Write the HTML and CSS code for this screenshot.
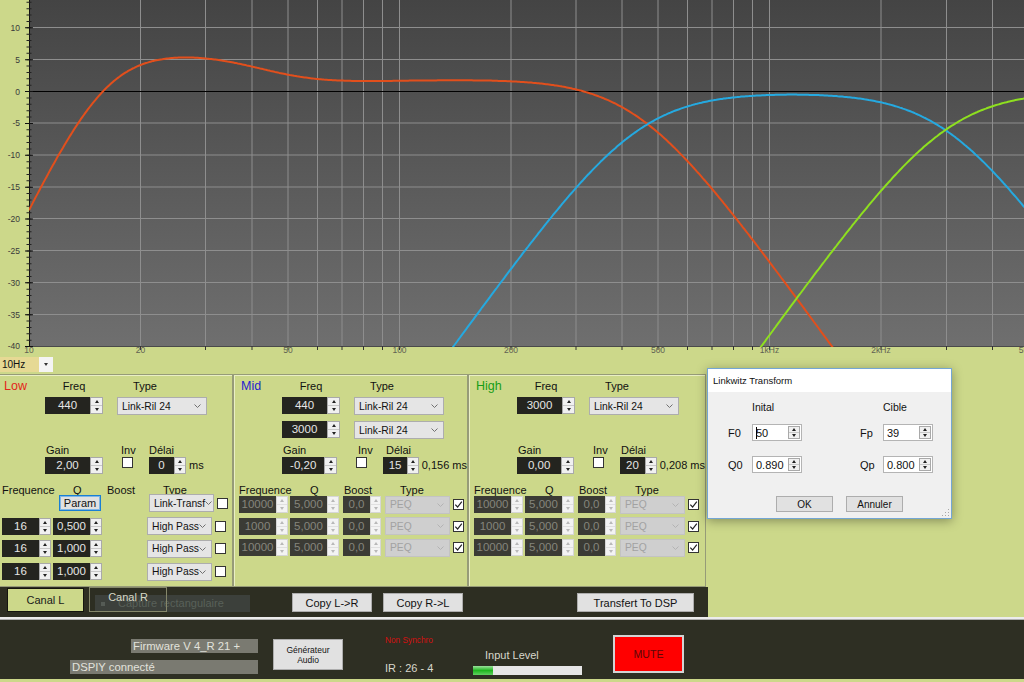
FILE: index.html
```html
<!DOCTYPE html>
<html lang="fr">
<head>
  <meta charset="UTF-8">
  <title>DSPIY - Crossover</title>
  <link rel="stylesheet" href="styles.css">
</head>
<body>
<div class="app">

  <!-- COURBE -->
  <div class="graph">
    <svg width="1024" height="357" viewBox="0 0 1024 357">
      <defs>
        <linearGradient id="fond" x1="0" y1="0" x2="0" y2="1">
          <stop offset="0" stop-color="#444444"/>
          <stop offset="1" stop-color="#6f6f6f"/>
        </linearGradient>
        <clipPath id="zone">
          <rect x="29" y="0" width="995" height="347"/>
        </clipPath>
      </defs>
      <rect x="29" y="0" width="995" height="346" fill="url(#fond)"/>
      <path class="grille" d="M29 27.5H1024M29 59.5H1024M29 123H1024M29 155H1024M29 187H1024M29 218.5H1024M29 250.5H1024M29 282.5H1024M29 314.5H1024
        M140.5 0V346M205.5 0V346M252 0V346M288 0V346M317.5 0V346M342 0V346M363.5 0V346M382.5 0V346M399.5 0V346
        M511 0V346M576 0V346M622 0V346M658 0V346M687.5 0V346M712 0V346M733.5 0V346M752.5 0V346M769.5 0V346
        M881 0V346M946.5 0V346M992.5 0V346"/>
      <path class="zero" d="M29 91.5H1024"/>
      <path class="axe-bas" d="M29 346.5H1024"/>
      <path class="ticks" d="M140.5 346v4M205.5 346v4M252 346v4M288 346v4M317.5 346v4M342 346v4M363.5 346v4M382.5 346v4M399.5 346v4
        M511 346v4M576 346v4M622 346v4M658 346v4M687.5 346v4M712 346v4M733.5 346v4M752.5 346v4M769.5 346v4M881 346v4M946.5 346v4M992.5 346v4"/>
      <line class="axe-y" x1="29.5" y1="0" x2="29.5" y2="347"/>
      <line class="tick-min" x1="29" y1="347" x2="29" y2="0"/>
      <line class="tick-maj" x1="29" y1="347" x2="29" y2="0"/>

      <g class="lbl-y">
        <text x="20" y="30.5">10</text>
        <text x="20" y="62.5">5</text>
        <text x="20" y="94.5">0</text>
        <text x="20" y="126">-5</text>
        <text x="20" y="158">-10</text>
        <text x="20" y="190">-15</text>
        <text x="20" y="221.5">-20</text>
        <text x="20" y="253.5">-25</text>
        <text x="20" y="285.5">-30</text>
        <text x="20" y="317.5">-35</text>
        <text x="20" y="348.5">-40</text>
      </g>
      <g class="lbl-x">
        <text x="29" y="353">10</text>
        <text x="140.5" y="353">20</text>
        <text x="288" y="353">50</text>
        <text x="399.5" y="353">100</text>
        <text x="511" y="353">200</text>
        <text x="658" y="353">500</text>
        <text x="769.5" y="353">1kHz</text>
        <text x="881" y="353">2kHz</text>
        <text x="1028.5" y="353">5kHz</text>
      </g>

      <g clip-path="url(#zone)">
        <polyline id="c-low" class="c-low" points=""/>
        <polyline id="c-mid" class="c-mid" points=""/>
        <polyline id="c-high" class="c-high" points=""/>
      </g>
    </svg>
  </div>

  <div class="scalebar">
    <div class="combo"><span class="combo-val">10Hz</span><span class="combo-btn"></span></div>
  </div>

  <!-- CANAUX -->
  <div class="panels">

    <div class="group low">
      <div class="r-head">
        <span class="title t-low">Low</span>
        <span class="lbl c-freq">Freq</span>
        <span class="lbl c-type">Type</span>
      </div>
      <div class="r-main">
        <div class="num n-main"><span class="val">440</span><span class="spin"><i></i><i class="dn"></i></span></div>
        <div class="sel s-main">Link-Ril 24<svg class="chev" width="7" height="4" viewBox="0 0 7 4"><path d="M0.5 0.5L3.5 3.5L6.5 0.5"/></svg></div>
      </div>
      <div class="r-main r-second"></div>
      <div class="r-glabels">
        <span class="lbl g-gain">Gain</span><span class="lbl g-inv">Inv</span><span class="lbl">Délai</span>
      </div>
      <div class="r-gain">
        <div class="num n-main"><span class="val">2,00</span><span class="spin"><i></i><i class="dn"></i></span></div>
        <span class="cb"></span>
        <div class="num n-del"><span class="val">0</span><span class="spin"><i></i><i class="dn"></i></span></div>
        <span class="unit">ms</span>
      </div>
      <div class="r-fhead">
        <span class="lbl h-freq">Frequence</span><span class="lbl h-q">Q</span><span class="lbl h-boost">Boost</span><span class="lbl">Type</span>
      </div>
      <div class="filters f-low">
        <div class="frow">
          <button class="param">Param</button>
          <div class="sel s-filt s-after">Link-Transf<svg class="chev" width="7" height="4" viewBox="0 0 7 4"><path d="M0.5 0.5L3.5 3.5L6.5 0.5"/></svg></div>
          <span class="cb"></span>
        </div>
        <div class="frow">
          <div class="num n-f"><span class="val">16</span><span class="spin"><i></i><i class="dn"></i></span></div>
          <div class="num n-f n-q"><span class="val">0,500</span><span class="spin"><i></i><i class="dn"></i></span></div>
          <div class="sel s-filt s-far">High Pass<svg class="chev" width="7" height="4" viewBox="0 0 7 4"><path d="M0.5 0.5L3.5 3.5L6.5 0.5"/></svg></div>
          <span class="cb"></span>
        </div>
        <div class="frow">
          <div class="num n-f"><span class="val">16</span><span class="spin"><i></i><i class="dn"></i></span></div>
          <div class="num n-f n-q"><span class="val">1,000</span><span class="spin"><i></i><i class="dn"></i></span></div>
          <div class="sel s-filt s-far">High Pass<svg class="chev" width="7" height="4" viewBox="0 0 7 4"><path d="M0.5 0.5L3.5 3.5L6.5 0.5"/></svg></div>
          <span class="cb"></span>
        </div>
        <div class="frow">
          <div class="num n-f"><span class="val">16</span><span class="spin"><i></i><i class="dn"></i></span></div>
          <div class="num n-f n-q"><span class="val">1,000</span><span class="spin"><i></i><i class="dn"></i></span></div>
          <div class="sel s-filt s-far">High Pass<svg class="chev" width="7" height="4" viewBox="0 0 7 4"><path d="M0.5 0.5L3.5 3.5L6.5 0.5"/></svg></div>
          <span class="cb"></span>
        </div>
      </div>
    </div>

    <div class="group mid">
      <div class="r-head">
        <span class="title t-mid">Mid</span>
        <span class="lbl c-freq">Freq</span>
        <span class="lbl c-type">Type</span>
      </div>
      <div class="r-main">
        <div class="num n-main"><span class="val">440</span><span class="spin"><i></i><i class="dn"></i></span></div>
        <div class="sel s-main">Link-Ril 24<svg class="chev" width="7" height="4" viewBox="0 0 7 4"><path d="M0.5 0.5L3.5 3.5L6.5 0.5"/></svg></div>
      </div>
      <div class="r-main r-second">
        <div class="num n-main"><span class="val">3000</span><span class="spin"><i></i><i class="dn"></i></span></div>
        <div class="sel s-main">Link-Ril 24<svg class="chev" width="7" height="4" viewBox="0 0 7 4"><path d="M0.5 0.5L3.5 3.5L6.5 0.5"/></svg></div>
      </div>
      <div class="r-glabels">
        <span class="lbl g-gain">Gain</span><span class="lbl g-inv">Inv</span><span class="lbl">Délai</span>
      </div>
      <div class="r-gain">
        <div class="num n-main"><span class="val">-0,20</span><span class="spin"><i></i><i class="dn"></i></span></div>
        <span class="cb"></span>
        <div class="num n-del"><span class="val">15</span><span class="spin"><i></i><i class="dn"></i></span></div>
        <span class="unit">0,156 ms</span>
      </div>
      <div class="r-fhead">
        <span class="lbl h-freq">Frequence</span><span class="lbl h-q">Q</span><span class="lbl h-boost">Boost</span><span class="lbl">Type</span>
      </div>
      <div class="filters">
        <div class="frow off">
          <div class="num n-f"><span class="val">10000</span><span class="spin"><i></i><i class="dn"></i></span></div>
          <div class="num n-f n-q"><span class="val">5,000</span><span class="spin"><i></i><i class="dn"></i></span></div>
          <div class="num n-b"><span class="val">0,0</span><span class="spin"><i></i><i class="dn"></i></span></div>
          <div class="sel s-filt">PEQ<svg class="chev" width="7" height="4" viewBox="0 0 7 4"><path d="M0.5 0.5L3.5 3.5L6.5 0.5"/></svg></div>
          <span class="cb on"><svg width="9" height="9" viewBox="0 0 9 9"><path d="M1.3 4.6L3.6 7L7.8 1.6"/></svg></span>
        </div>
        <div class="frow off">
          <div class="num n-f"><span class="val">1000</span><span class="spin"><i></i><i class="dn"></i></span></div>
          <div class="num n-f n-q"><span class="val">5,000</span><span class="spin"><i></i><i class="dn"></i></span></div>
          <div class="num n-b"><span class="val">0,0</span><span class="spin"><i></i><i class="dn"></i></span></div>
          <div class="sel s-filt">PEQ<svg class="chev" width="7" height="4" viewBox="0 0 7 4"><path d="M0.5 0.5L3.5 3.5L6.5 0.5"/></svg></div>
          <span class="cb on"><svg width="9" height="9" viewBox="0 0 9 9"><path d="M1.3 4.6L3.6 7L7.8 1.6"/></svg></span>
        </div>
        <div class="frow off">
          <div class="num n-f"><span class="val">10000</span><span class="spin"><i></i><i class="dn"></i></span></div>
          <div class="num n-f n-q"><span class="val">5,000</span><span class="spin"><i></i><i class="dn"></i></span></div>
          <div class="num n-b"><span class="val">0,0</span><span class="spin"><i></i><i class="dn"></i></span></div>
          <div class="sel s-filt">PEQ<svg class="chev" width="7" height="4" viewBox="0 0 7 4"><path d="M0.5 0.5L3.5 3.5L6.5 0.5"/></svg></div>
          <span class="cb on"><svg width="9" height="9" viewBox="0 0 9 9"><path d="M1.3 4.6L3.6 7L7.8 1.6"/></svg></span>
        </div>
      </div>
    </div>

    <div class="group high">
      <div class="r-head">
        <span class="title t-high">High</span>
        <span class="lbl c-freq">Freq</span>
        <span class="lbl c-type">Type</span>
      </div>
      <div class="r-main">
        <div class="num n-main"><span class="val">3000</span><span class="spin"><i></i><i class="dn"></i></span></div>
        <div class="sel s-main">Link-Ril 24<svg class="chev" width="7" height="4" viewBox="0 0 7 4"><path d="M0.5 0.5L3.5 3.5L6.5 0.5"/></svg></div>
      </div>
      <div class="r-main r-second"></div>
      <div class="r-glabels">
        <span class="lbl g-gain">Gain</span><span class="lbl g-inv">Inv</span><span class="lbl">Délai</span>
      </div>
      <div class="r-gain">
        <div class="num n-main"><span class="val">0,00</span><span class="spin"><i></i><i class="dn"></i></span></div>
        <span class="cb"></span>
        <div class="num n-del"><span class="val">20</span><span class="spin"><i></i><i class="dn"></i></span></div>
        <span class="unit">0,208 ms</span>
      </div>
      <div class="r-fhead">
        <span class="lbl h-freq">Frequence</span><span class="lbl h-q">Q</span><span class="lbl h-boost">Boost</span><span class="lbl">Type</span>
      </div>
      <div class="filters">
        <div class="frow off">
          <div class="num n-f"><span class="val">10000</span><span class="spin"><i></i><i class="dn"></i></span></div>
          <div class="num n-f n-q"><span class="val">5,000</span><span class="spin"><i></i><i class="dn"></i></span></div>
          <div class="num n-b"><span class="val">0,0</span><span class="spin"><i></i><i class="dn"></i></span></div>
          <div class="sel s-filt">PEQ<svg class="chev" width="7" height="4" viewBox="0 0 7 4"><path d="M0.5 0.5L3.5 3.5L6.5 0.5"/></svg></div>
          <span class="cb on"><svg width="9" height="9" viewBox="0 0 9 9"><path d="M1.3 4.6L3.6 7L7.8 1.6"/></svg></span>
        </div>
        <div class="frow off">
          <div class="num n-f"><span class="val">1000</span><span class="spin"><i></i><i class="dn"></i></span></div>
          <div class="num n-f n-q"><span class="val">5,000</span><span class="spin"><i></i><i class="dn"></i></span></div>
          <div class="num n-b"><span class="val">0,0</span><span class="spin"><i></i><i class="dn"></i></span></div>
          <div class="sel s-filt">PEQ<svg class="chev" width="7" height="4" viewBox="0 0 7 4"><path d="M0.5 0.5L3.5 3.5L6.5 0.5"/></svg></div>
          <span class="cb on"><svg width="9" height="9" viewBox="0 0 9 9"><path d="M1.3 4.6L3.6 7L7.8 1.6"/></svg></span>
        </div>
        <div class="frow off">
          <div class="num n-f"><span class="val">10000</span><span class="spin"><i></i><i class="dn"></i></span></div>
          <div class="num n-f n-q"><span class="val">5,000</span><span class="spin"><i></i><i class="dn"></i></span></div>
          <div class="num n-b"><span class="val">0,0</span><span class="spin"><i></i><i class="dn"></i></span></div>
          <div class="sel s-filt">PEQ<svg class="chev" width="7" height="4" viewBox="0 0 7 4"><path d="M0.5 0.5L3.5 3.5L6.5 0.5"/></svg></div>
          <span class="cb on"><svg width="9" height="9" viewBox="0 0 9 9"><path d="M1.3 4.6L3.6 7L7.8 1.6"/></svg></span>
        </div>
      </div>
    </div>

  </div>

  <!-- ONGLETS -->
  <div class="tabbar">
    <div class="tabstrip">
      <div class="capture"><span class="capture-ico"></span>Capture rectangulaire</div>
      <div class="tab tab-on">Canal L</div>
      <div class="tab tab-off">Canal R</div>
      <button class="btn b-copy1">Copy L-&gt;R</button>
      <button class="btn b-copy2">Copy R-&gt;L</button>
      <button class="btn b-dsp">Transfert To DSP</button>
    </div>
  </div>

  <!-- PIED -->
  <div class="footer">
    <div class="fw-col">
      <div class="info fw">Firmware V 4_R 21 +</div>
      <div class="info dsp">DSPIY connecté</div>
    </div>
    <button class="gen">Générateur<br>Audio</button>
    <div class="status">
      <div class="sync">Non Synchro</div>
      <div class="ir">IR : 26 - 4</div>
    </div>
    <div class="level">
      <div class="lvl-lbl">Input Level</div>
      <div class="bar"><div class="bar-fill" style="width: 18%"></div></div>
    </div>
    <button class="mute">MUTE</button>
  </div>

  <!-- DIALOGUE -->
  <div class="dialog">
    <div class="dlg-title">Linkwitz Transform</div>
    <div class="dlg-cols"><span class="dc1">Inital</span><span class="dc2">Cible</span></div>
    <div class="dlg-row">
      <span class="dl">F0</span>
      <div class="dnum"><span class="dval"><span class="caret"></span>50</span><span class="spin"><i></i><i class="dn"></i></span></div>
      <span class="dl dl2">Fp</span>
      <div class="dnum"><span class="dval">39</span><span class="spin"><i></i><i class="dn"></i></span></div>
    </div>
    <div class="dlg-row r-q">
      <span class="dl">Q0</span>
      <div class="dnum"><span class="dval">0.890</span><span class="spin"><i></i><i class="dn"></i></span></div>
      <span class="dl dl2">Qp</span>
      <div class="dnum"><span class="dval">0.800</span><span class="spin"><i></i><i class="dn"></i></span></div>
    </div>
    <div class="dlg-btns">
      <button class="dbtn b-ok">OK</button>
      <button class="dbtn">Annuler</button>
    </div>
    <span class="grip"></span>
  </div>

</div>
<script src="courbes.js"></script>
</body>
</html>
```

FILE: courbes.js
```js
// courbes de reponse des trois voies, calculees depuis les reglages affiches
const X0 = 29;          // x de 10 Hz
const PX_DECADE = 370.3;
const Y0 = 91;          // y de 0 dB
const PX_DB = 6.375;

function hp2(f, f0, q) {
  const x = f / f0;
  return 10 * Math.log10(Math.pow(x, 4) / (Math.pow(1 - x * x, 2) + Math.pow(x / q, 2)));
}

function lp2(f, f0, q) {
  const x = f / f0;
  return 10 * Math.log10(1 / (Math.pow(1 - x * x, 2) + Math.pow(x / q, 2)));
}

function lr24hp(f, f0) { return 2 * hp2(f, f0, Math.SQRT1_2); }
function lr24lp(f, f0) { return 2 * lp2(f, f0, Math.SQRT1_2); }

// Linkwitz transform : F0/Q0 -> Fp/Qp
function linkwitz(f, f0, q0, fp, qp) {
  const num = Math.pow(f0 * f0 - f * f, 2) + Math.pow(f * f0 / q0, 2);
  const den = Math.pow(fp * fp - f * f, 2) + Math.pow(f * fp / qp, 2);
  return 10 * Math.log10(num / den);
}

const voies = {
  low: f => 2 + linkwitz(f, 50, 0.89, 39, 0.8) + hp2(f, 16, 0.5) + hp2(f, 16, 1) + hp2(f, 16, 1) + lr24lp(f, 440),
  mid: f => -0.2 + lr24hp(f, 440) + lr24lp(f, 3000),
  high: f => lr24hp(f, 3000)
};

Object.keys(voies).forEach(nom => {
  const pts = [];
  for (let i = 0; i <= 700; i++) {
    const lf = 1 + i * 2.8 / 700;
    const db = voies[nom](Math.pow(10, lf));
    const x = X0 + PX_DECADE * (lf - 1);
    const y = Math.min(Y0 - db * PX_DB, 420);
    pts.push(x.toFixed(1) + "," + y.toFixed(1));
  }
  document.getElementById("c-" + nom).setAttribute("points", pts.join(" "));
});
```

FILE: styles.css
```css
body {
  margin: 0;
  font-family: "Liberation Sans", Arial, sans-serif;
  font-size: 11px;
  color: #111;
  background-color: #ccd88a;
  overflow: hidden;
}

.app {
  position: relative;
  width: 1024px;
  height: 682px;
  overflow: hidden;
}

button {
  font-family: inherit;
  padding: 0;
  margin: 0;
  cursor: pointer;
}

/* courbe */

.graph {
  height: 357px;
}

.graph svg {
  display: block;
}

.grille {
  fill: none;
  stroke: #8e8e8e;
  stroke-width: 1;
}

.zero {
  stroke: #000;
  stroke-width: 1;
}

.axe-bas {
  stroke: #4a4a4a;
  stroke-width: 1;
}

.axe-y {
  stroke: #111;
  stroke-width: 1;
}

.ticks {
  stroke: #333;
  stroke-width: 1;
}

.tick-min {
  stroke: #222;
  stroke-width: 5;
  stroke-dasharray: 1 5.375;
}

.tick-maj {
  stroke: #111;
  stroke-width: 8;
  stroke-dasharray: 1 30.875;
}

.lbl-y text {
  font-family: "Liberation Sans", Arial, sans-serif;
  font-size: 8.5px;
  fill: #3a3a3a;
  text-anchor: end;
}

.lbl-x text {
  font-family: "Liberation Sans", Arial, sans-serif;
  font-size: 8.5px;
  fill: #5f6152;
  text-anchor: middle;
}

.c-low, .c-mid, .c-high {
  fill: none;
  stroke-width: 2;
  stroke-linejoin: round;
}

.c-low { stroke: #e24f1c; }
.c-mid { stroke: #25a9e0; }
.c-high { stroke: #8ee01f; }

/* echelle */

.scalebar {
  height: 17px;
}

.combo {
  display: flex;
  width: 53px;
  height: 15px;
}

.combo-val {
  width: 39px;
  background: #e6d994;
  font-size: 10px;
  line-height: 15px;
  padding-left: 2px;
  box-sizing: border-box;
}

.combo-btn {
  width: 14px;
  background: #f4f4f4;
  display: flex;
  align-items: center;
  justify-content: center;
}

.combo-btn::after {
  content: "";
  border-left: 2.5px solid transparent;
  border-right: 2.5px solid transparent;
  border-top: 3px solid #333;
}

/* groupes */

.panels {
  display: flex;
  height: 213px;
}

.group {
  height: 213px;
  box-sizing: border-box;
  border: 1px solid #969b78;
  box-shadow: inset 1px 1px 0 #e9efc4;
}

.low { width: 237px; margin-left: -4px; }
.mid { width: 235px; }
.high { width: 238px; }

.lbl {
  white-space: nowrap;
}

.title {
  width: 41px;
  font-size: 12.5px;
}

.t-low { color: #e3261a; }
.t-mid { color: #2323cf; }
.t-high { color: #179d17; }

.r-head {
  display: flex;
  height: 12px;
  line-height: 12px;
  margin-top: 5px;
  padding-left: 7px;
}

.c-freq {
  width: 58px;
  text-align: center;
}

.c-type {
  width: 58px;
  margin-left: 13px;
  text-align: center;
}

.r-main {
  display: flex;
  height: 17px;
  margin-top: 5px;
  padding-left: 48px;
}

.r-second {
  margin-top: 7px;
}

.r-glabels {
  display: flex;
  height: 12px;
  line-height: 12px;
  margin-top: 6px;
  padding-left: 49px;
}

.g-gain { width: 75px; }
.g-inv { width: 28px; }

.r-gain {
  display: flex;
  height: 17px;
  margin-top: 1px;
  padding-left: 48px;
}

.r-gain .cb {
  margin-left: 19px;
  margin-right: 16px;
  align-self: flex-start;
}

.unit {
  margin-left: 3px;
  line-height: 17px;
  white-space: nowrap;
}

.r-fhead {
  display: flex;
  height: 12px;
  line-height: 12px;
  margin-top: 10px;
  padding-left: 5px;
}

.h-freq { width: 71px; }
.h-q { width: 34px; }
.h-boost { width: 56px; }

.filters {
  display: flex;
  flex-direction: column;
  gap: 4.5px;
  padding-left: 5px;
}

.f-low {
  margin-top: -2px;
  gap: 5.7px;
}

.frow {
  display: flex;
  align-items: center;
  height: 17px;
}

.f-low .frow:first-child {
  height: 18px;
}

/* champs numeriques */

.num {
  display: flex;
  height: 17px;
}

.val {
  flex: 1;
  background: #24241f;
  color: #e6e6e6;
  text-align: center;
  line-height: 17px;
  font-size: 11.5px;
  overflow: hidden;
}

.spin {
  width: 12px;
  box-sizing: border-box;
  border: 1px solid #a9a9a9;
  background: #f0f0f0;
  display: flex;
  flex-direction: column;
}

.spin i {
  flex: 1;
  display: flex;
  align-items: center;
  justify-content: center;
}

.spin i + i {
  border-top: 1px solid #c8c8c8;
}

.spin i::after {
  content: "";
  border-left: 2.5px solid transparent;
  border-right: 2.5px solid transparent;
  border-bottom: 3px solid #222;
}

.spin i.dn::after {
  border-bottom: 0;
  border-top: 3px solid #222;
}

.n-main { width: 58px; }
.n-main .spin { width: 13px; }
.n-del { width: 37px; }
.n-f { width: 49px; }
.n-q { margin-left: 2px; }
.n-b { width: 38px; margin-left: 4px; }
.n-b .spin { width: 11px; }

.off .val {
  background: #3b3b35;
  color: #85857c;
}

.off .spin {
  border-color: #d6d6d6;
  background: #f3f3f3;
}

.off .spin i + i {
  border-top-color: #e0e0e0;
}

.off .spin i::after {
  border-bottom-color: #b8b8b8;
}

.off .spin i.dn::after {
  border-top-color: #b8b8b8;
}

/* listes */

.sel {
  display: flex;
  align-items: center;
  box-sizing: border-box;
  height: 18px;
  padding-left: 4px;
  background: #e5e5e5;
  border: 1px solid #adadad;
  font-size: 10.3px;
  white-space: nowrap;
  overflow: hidden;
}

.chev {
  margin-left: auto;
  margin-right: 5px;
  flex-shrink: 0;
  fill: none;
  stroke: #707070;
  stroke-width: 1;
}

.s-main {
  width: 90px;
  margin-left: 14px;
}

.s-filt {
  width: 65px;
  margin-left: 4px;
}

.s-far { margin-left: 45px; }
.s-after { margin-left: 48px; }

.off .sel {
  background: #cfcfcf;
  border-color: #c3c3c3;
  color: #a2a2a2;
}

.off .chev {
  stroke: #b3b3b3;
}

/* cases */

.cb {
  width: 11px;
  height: 11px;
  box-sizing: border-box;
  border: 1px solid #333;
  background: #fff;
  display: flex;
  align-items: center;
  justify-content: center;
  flex-shrink: 0;
}

.frow .cb {
  margin-left: 3px;
}

.cb svg {
  fill: none;
  stroke: #222;
  stroke-width: 1.2;
}

.param {
  width: 42px;
  height: 16px;
  margin-left: 57px;
  background: #e1e1e1;
  border: 1px solid #1a7fd4;
  box-shadow: inset 0 0 0 1px #7fb6e6;
  font-size: 11px;
  color: #111;
}

/* onglets */

.tabbar {
  height: 30px;
  display: flex;
}

.tabstrip {
  position: relative;
  width: 708px;
  background: #2d2e22;
  display: flex;
  align-items: flex-start;
}

.capture {
  position: absolute;
  left: 95px;
  top: 8px;
  width: 155px;
  height: 17px;
  background: #3c403b;
  color: #596059;
  line-height: 17px;
  font-size: 11px;
  padding-left: 6px;
  box-sizing: border-box;
  display: flex;
  align-items: center;
  gap: 13px;
}

.capture-ico {
  width: 4px;
  height: 4px;
  background: #555b55;
}

.tab {
  position: relative;
  box-sizing: border-box;
  text-align: center;
  font-size: 11px;
}

.tab-on {
  width: 77px;
  height: 24px;
  margin-left: 7px;
  margin-top: 1px;
  background: #ccd88a;
  border: 1px solid #15150f;
  line-height: 22px;
  color: #1a1a1a;
}

.tab-off {
  width: 78px;
  height: 25px;
  margin-left: 5px;
  border: 1px solid #85876a;
  line-height: 19px;
  color: #d7d8c6;
}

.btn {
  height: 19px;
  margin-top: 6px;
  background: #e1e1e1;
  border: 1px solid #adadad;
  font-size: 11px;
  color: #111;
}

.b-copy1 { width: 80px; margin-left: 125px; }
.b-copy2 { width: 80px; margin-left: 11px; }
.b-dsp { width: 117px; margin-left: 114px; }

/* pied */

.footer {
  display: flex;
  align-items: flex-start;
  height: 62px;
  box-sizing: border-box;
  border-top: 2px solid #ececec;
  box-shadow: inset 0 1px 0 #b0b0b0;
  background: #2e2f23;
}

.fw-col {
  width: 258px;
  display: flex;
  flex-direction: column;
  align-items: flex-end;
}

.info {
  height: 14px;
  line-height: 14px;
  background: #7a7a71;
  color: #e2e2dc;
  font-size: 11.3px;
  padding-left: 2px;
  box-sizing: border-box;
  white-space: nowrap;
}

.fw { width: 127px; margin-top: 20px; }
.dsp { width: 188px; margin-top: 7px; }

.gen {
  width: 70px;
  height: 31px;
  margin-left: 15px;
  margin-top: 20px;
  background: #e1e1e1;
  border: 1px solid #adadad;
  font-size: 8.5px;
  line-height: 10px;
  color: #111;
}

.status {
  width: 88px;
  margin-left: 42px;
}

.sync {
  margin-top: 16px;
  font-size: 8.3px;
  line-height: 11px;
  color: #d41010;
}

.ir {
  margin-top: 16px;
  font-size: 11px;
  line-height: 13px;
  color: #d8d8cc;
}

.level {
  width: 109px;
}

.lvl-lbl {
  margin-top: 30px;
  padding-left: 12px;
  line-height: 13px;
  color: #d8d8cc;
}

.bar {
  height: 9px;
  margin-top: 4px;
  background: #e6e6e6;
}

.bar-fill {
  height: 100%;
  background: linear-gradient(#9be29b, #1fb51f 50%, #62d062);
}

.mute {
  width: 71px;
  height: 38px;
  margin-left: 31px;
  margin-top: 16px;
  background: #ff0000;
  border: 2px solid #d3d3d3;
  color: #5a0808;
  font-size: 10.6px;
}

/* boite de dialogue */

.dialog {
  position: absolute;
  left: 707px;
  top: 368px;
  width: 245px;
  height: 151px;
  box-sizing: border-box;
  background: #f0f0f0;
  border: 1px solid #74a6d3;
  box-shadow: 0 2px 10px rgba(0, 0, 0, 0.35);
  z-index: 10;
}

.dlg-title {
  height: 23px;
  line-height: 23px;
  padding-left: 5px;
  background: #fff;
  font-size: 9.5px;
  color: #111;
}

.dlg-cols {
  display: flex;
  height: 14px;
  line-height: 14px;
  margin-top: 8px;
  padding-left: 44px;
  font-size: 10.5px;
}

.dc1 { width: 131px; }

.dlg-row {
  display: flex;
  align-items: center;
  height: 17px;
  margin-top: 10px;
  padding-left: 20px;
}

.r-q {
  margin-top: 15px;
}

.dl {
  width: 24px;
  font-size: 11px;
}

.dl2 {
  width: 23px;
  margin-left: 58px;
}

.dnum {
  display: flex;
  width: 50px;
  height: 17px;
  box-sizing: border-box;
  border: 1px solid #b4b4b4;
  background: #fff;
  padding: 1px;
}

.dval {
  flex: 1;
  display: flex;
  align-items: center;
  padding-left: 2px;
  font-size: 11px;
}

.caret {
  width: 1px;
  height: 12px;
  background: #000;
  margin-right: -1px;
}

.dnum .spin {
  width: 12px;
}

.dlg-btns {
  display: flex;
  margin-top: 23px;
  padding-left: 68px;
  gap: 13px;
}

.dbtn {
  width: 57px;
  height: 16px;
  background: #e1e1e1;
  border: 1px solid #adadad;
  font-size: 10px;
  color: #111;
}

.grip {
  position: absolute;
  right: 2px;
  bottom: 2px;
  width: 8px;
  height: 8px;
  background: radial-gradient(circle, #a8a8a8 0.8px, transparent 1px) 0 0 / 3px 3px;
  clip-path: polygon(100% 0, 100% 100%, 0 100%);
}
```
